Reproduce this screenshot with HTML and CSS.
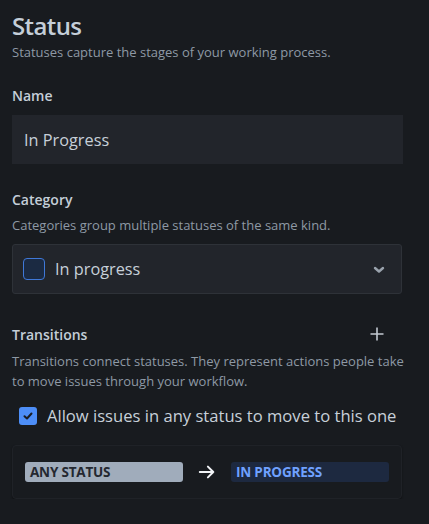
FILE: index.html
```html
<!DOCTYPE html>
<html>
<head>
<meta charset="utf-8">
<link rel="stylesheet" href="styles.css">
</head>
<body>
<div class="page">
  <h1 class="title">Status</h1>
  <p class="desc">Statuses capture the stages of your working process.</p>

  <div class="label name-label">Name</div>
  <div class="input">In Progress</div>

  <div class="label cat-label">Category</div>
  <p class="desc">Categories group multiple statuses of the same kind.</p>
  <div class="select">
    <span class="swatch"></span>
    <span class="select-text">In progress</span>
    <svg class="chevron" width="12" height="8" viewBox="0 0 12 8"><path d="M2 2 L6 5.5 L10 2" fill="none" stroke="#9aa3ad" stroke-width="2.4" stroke-linecap="round" stroke-linejoin="round"/></svg>
  </div>

  <div class="trans-head">
    <div class="label">Transitions</div>
    <svg class="plus" width="16" height="16" viewBox="0 0 16 16"><path d="M8 1.5 V14.5 M1.5 8 H14.5" stroke="#c2c9d1" stroke-width="1.6"/></svg>
  </div>
  <p class="desc trans-desc">Transitions connect statuses. They represent actions people take to move issues through your workflow.</p>

  <div class="check-row">
    <span class="check"><svg width="12" height="12" viewBox="0 0 12 12"><path d="M2.5 6.2 L5 8.5 L9.5 3.5" fill="none" stroke="#1a1d22" stroke-width="2" stroke-linecap="round" stroke-linejoin="round"/></svg></span>
    <span class="check-text">Allow issues in any status to move to this one</span>
  </div>

  <div class="card">
    <span class="badge badge-any">ANY STATUS</span>
    <svg class="arrow" width="20" height="16" viewBox="0 0 20 16"><path d="M2 8 H17 M11 2 L17 8 L11 14" fill="none" stroke="#f2f4f7" stroke-width="2.2" stroke-linecap="round" stroke-linejoin="round"/></svg>
    <span class="badge badge-prog">IN PROGRESS</span>
  </div>
</div>
</body>
</html>
```

FILE: styles.css
```css
html, body {
  margin: 0;
  padding: 0;
  background: #181b1f;
}
body {
  font-family: "Open Sans", "Noto Sans", sans-serif;
  color: #c7d0d9;
}
.page {
  padding: 10px 12px 0 12px;
}
.title {
  margin: 0;
  font-size: 24px;
  line-height: 32px;
  font-weight: 600;
  letter-spacing: -0.6px;
  color: #c4ced8;
}
.desc {
  margin: 0;
  font-size: 13px;
  line-height: 20px;
  color: #8e99a5;
}
.label {
  font-size: 14px;
  font-weight: 600;
  line-height: 20px;
  color: #c4ced8;
}
.name-label {
  margin-top: 24px;
  margin-bottom: 9px;
}
.input {
  height: 49px;
  box-sizing: border-box;
  width: 391px;
  background: #22252b;
  font-size: 16.3px;
  line-height: 50px;
  padding-left: 12px;
  color: #c7d0d9;
}
.cat-label {
  margin-top: 26px;
  margin-bottom: 5px;
}
.select {
  margin-top: 9px;
  height: 50px;
  box-sizing: border-box;
  width: 390px;
  background: #22252b;
  border: 1px solid #2e3238;
  border-radius: 3px;
  display: flex;
  align-items: center;
  padding: 0 12px 0 10px;
}
.swatch {
  width: 22px;
  height: 22px;
  box-sizing: border-box;
  border: 1.5px solid #3f78d8;
  background: #1b2a42;
  border-radius: 4px;
  flex: none;
}
.select-text {
  margin-left: 10px;
  font-size: 16.3px;
  color: #c7d0d9;
  flex: 1;
}
.chevron {
  margin-right: 4px;
  margin-top: 2px;
}
.trans-head {
  margin-top: 31px;
  display: flex;
  align-items: center;
  justify-content: space-between;
  width: 374px;
}
.plus {
  margin-top: -2px;
  margin-right: 1px;
}
.trans-desc {
  margin-top: 6px;
}
.check-row {
  margin-top: 13px;
  display: flex;
  align-items: center;
  padding-left: 7px;
}
.check {
  width: 18px;
  height: 18px;
  border-radius: 3px;
  background: #4d8ef7;
  display: flex;
  align-items: center;
  justify-content: center;
  flex: none;
}
.check-text {
  margin-left: 10px;
  font-size: 16.6px;
  color: #c7d0d9;
}
.card {
  margin-top: 18px;
  width: 390px;
  height: 54px;
  box-sizing: border-box;
  background: #181b1f;
  border: 1px solid #1f2227;
  border-radius: 4px;
  box-shadow: 0 1px 2px rgba(0,0,0,0.4);
  display: flex;
  align-items: center;
  padding: 0 12px;
}
.badge {
  width: 158px;
  height: 20px;
  box-sizing: border-box;
  border-radius: 3px;
  font-size: 13.5px;
  font-weight: 700;
  letter-spacing: -0.2px;
  line-height: 20px;
  padding-left: 5px;
  flex: none;
}
.badge-any {
  background: #a0acbb;
  color: #242830;
}
.badge-prog {
  background: #1d2940;
  color: #6fa1ff;
}
.arrow {
  margin: 0 15px 0 15px;
}
```
